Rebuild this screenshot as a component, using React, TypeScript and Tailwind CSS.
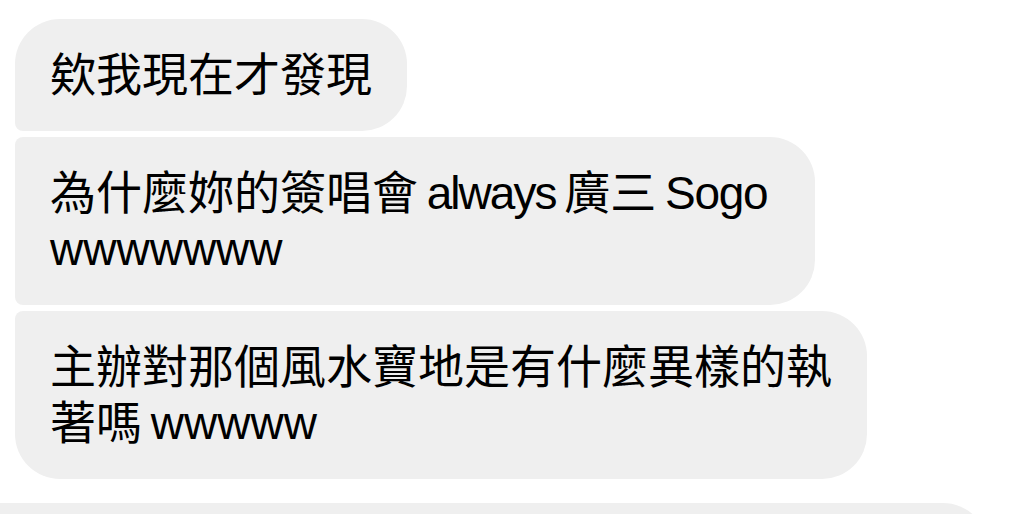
import type { ReactNode } from 'react';

const messages: { id: number; lines: ReactNode[]; shape: string }[] = [
  {
    id: 1,
    lines: ['欸我現在才發現'],
    shape: 'pr-[35px] rounded-tl-[45px] rounded-tr-[45px] rounded-br-[45px] rounded-bl-[8px]',
  },
  {
    id: 2,
    lines: [
      <>為什麼妳的簽唱會 <span className="tracking-[-2px]">always</span> 廣三 <span className="tracking-[-1.25px]">Sogo</span></>,
      'wwwwwww',
    ],
    shape: 'pr-[48px] rounded-tl-[8px] rounded-tr-[45px] rounded-br-[45px] rounded-bl-[8px]',
  },
  {
    id: 3,
    lines: ['主辦對那個風水寶地是有什麼異樣的執', '著嗎 wwwww'],
    shape: 'pr-[35px] rounded-tl-[8px] rounded-tr-[45px] rounded-br-[45px] rounded-bl-[45px]',
  },
];

function Bubble({ lines, shape }: { lines: ReactNode[]; shape: string }) {
  return (
    <div className={`bg-[#efefef] pl-[35px] py-[28px] text-[46px] leading-[56px] text-black whitespace-nowrap [word-spacing:-4px] ${shape}`}>
      {lines.map((line, i) => (
        <div key={i}>{line}</div>
      ))}
    </div>
  );
}

export default function App() {
  return (
    <div
      className="h-[514px] w-[1024px] overflow-hidden bg-white pt-[19px]"
      style={{ fontFamily: '"Liberation Sans", "Noto Sans CJK TC", sans-serif' }}
    >
      <div className="flex flex-col items-start gap-[6px] pl-[15px]">
        {messages.map(m => (
          <Bubble key={m.id} lines={m.lines} shape={m.shape} />
        ))}
      </div>
      {/* next message, cut off at the bottom */}
      <div className="mt-[24px] h-[60px] w-[988px] rounded-tr-[45px] bg-[#efefef]" />
    </div>
  );
}
